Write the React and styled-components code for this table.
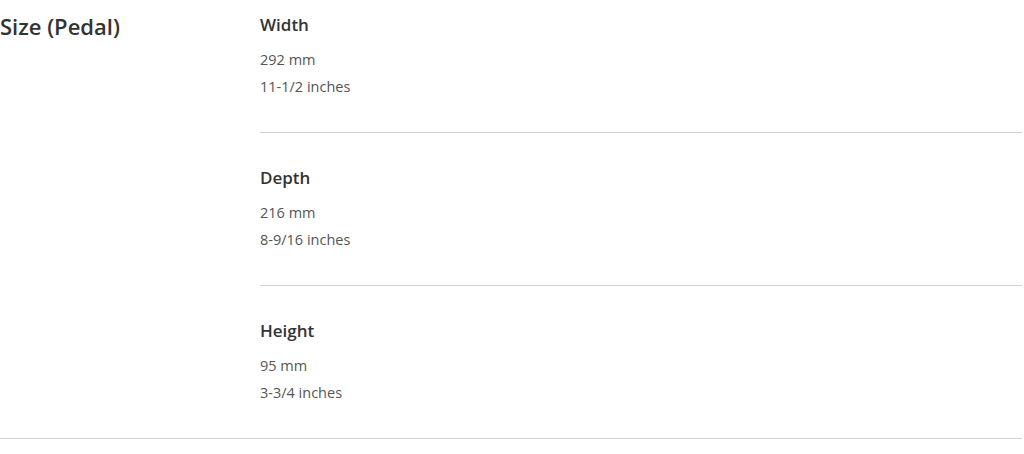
import React from "react";
import styled, { createGlobalStyle } from "styled-components";

const Global = createGlobalStyle`
  html, body { margin: 0; padding: 0; background: #fff; }
  body { font-family: "Open Sans", Lato, sans-serif; }
`;

const Row = styled.section`
  display: flex;
  width: 1022px;
  padding-top: 1px;
  border-bottom: 1px solid #d0d0d0;
`;

const Heading = styled.h2`
  flex: 0 0 260px;
  margin: 0;
  padding-top: 10px;
  font-size: 22px;
  line-height: 30px;
  font-weight: 600;
  color: #333;
`;

const List = styled.div`
  flex: 1;
  display: flex;
  flex-direction: column;
`;

const Item = styled.div`
  padding: 33px 0 32px;
  border-bottom: 1px solid #d0d0d0;
  &:first-child { padding-top: 12px; }
  &:last-child { border-bottom: none; }
`;

const Title = styled.h3`
  margin: 0 0 9px;
  font-size: 17px;
  line-height: 24px;
  font-weight: 600;
  color: #333;
`;

const Value = styled.div`
  font-size: 14.5px;
  line-height: 27px;
  color: #555;
`;

const data = [
  { title: "Width", values: ["292 mm", "11-1/2 inches"] },
  { title: "Depth", values: ["216 mm", "8-9/16 inches"] },
  { title: "Height", values: ["95 mm", "3-3/4 inches"] },
];

export default function App() {
  return (
    <>
      <Global />
      <Row>
        <Heading>Size (Pedal)</Heading>
        <List>
          {data.map((d) => (
            <Item key={d.title}>
              <Title>{d.title}</Title>
              {d.values.map((v) => (
                <Value key={v}>{v}</Value>
              ))}
            </Item>
          ))}
        </List>
      </Row>
    </>
  );
}
